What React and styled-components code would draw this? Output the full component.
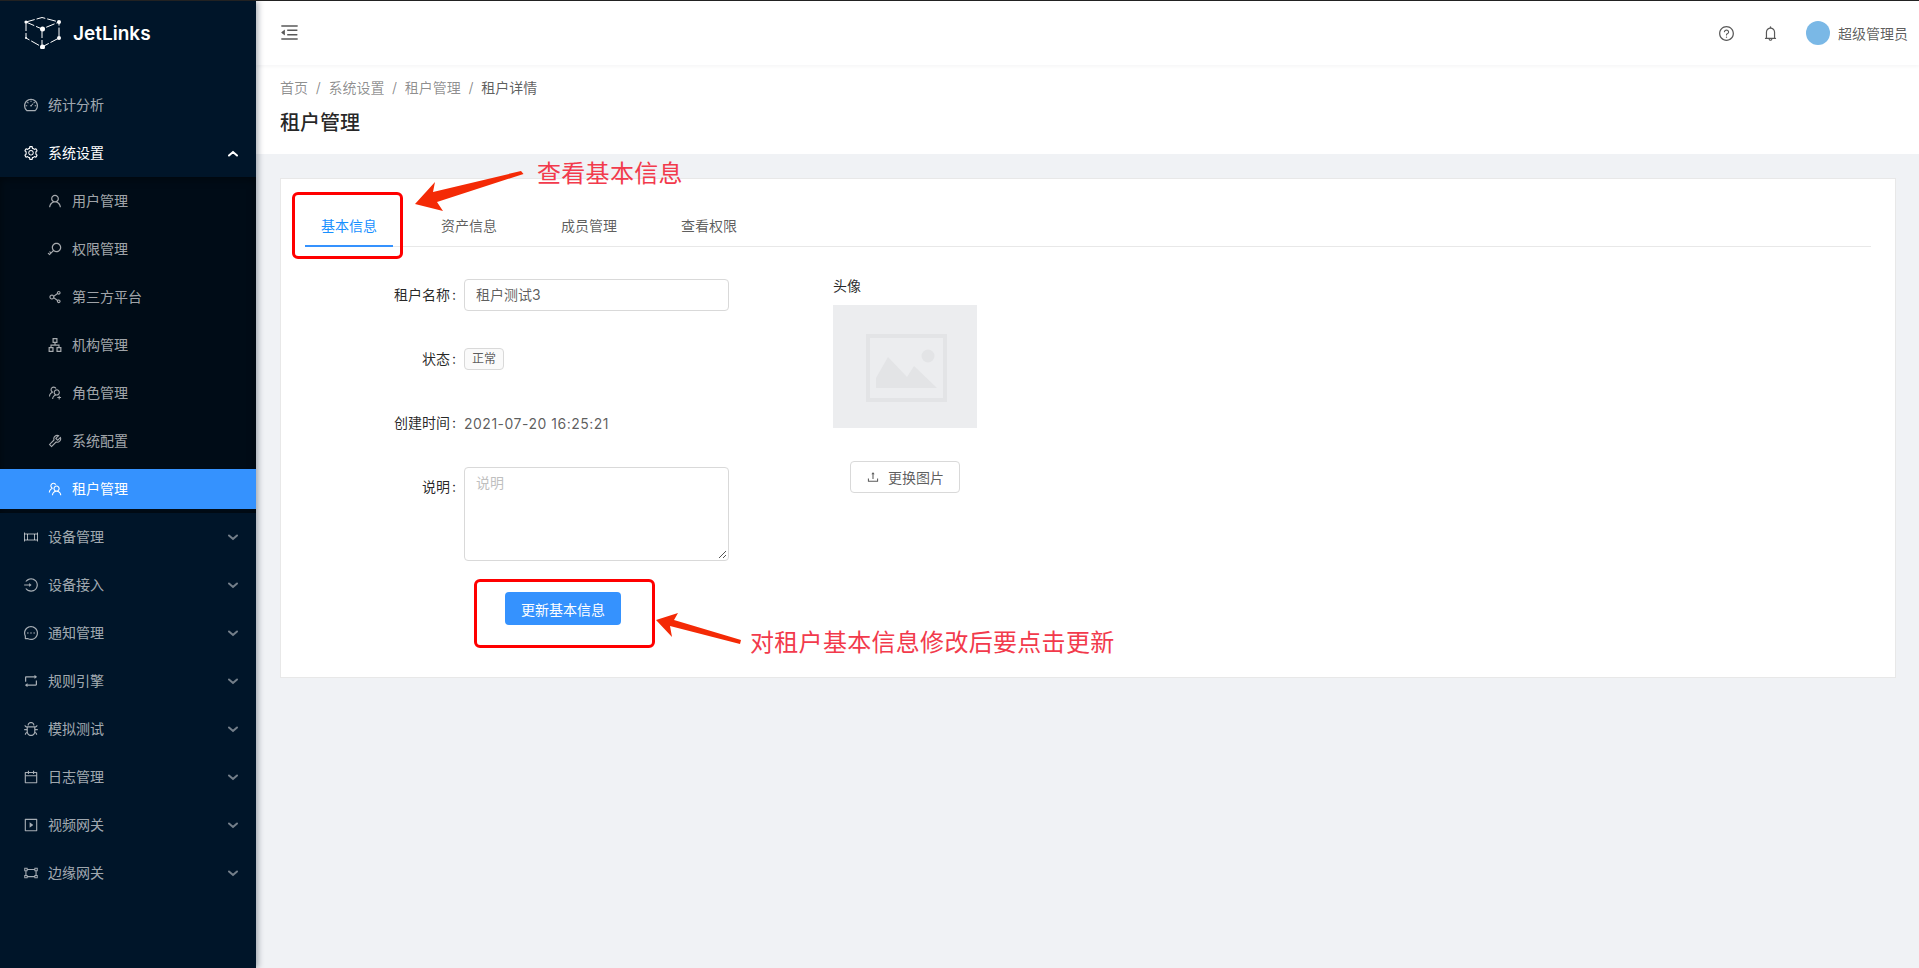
import React from "react";
import styled, { createGlobalStyle } from "styled-components";
import {
  AiOutlineDashboard, AiOutlineSetting, AiOutlineUser, AiOutlineKey, AiOutlineShareAlt,
  AiOutlineApartment, AiOutlineUsergroupAdd, AiOutlineTool, AiOutlineTeam, AiOutlineLogin,
  AiOutlineMessage, AiOutlineRetweet, AiOutlineBug, AiOutlineCalendar, AiOutlinePlaySquare,
  AiOutlineGateway, AiOutlineMenuFold, AiOutlineQuestionCircle, AiOutlineBell, AiOutlineUpload,
} from "react-icons/ai";

const FONT = `Inter, "Noto Sans CJK SC", sans-serif`;

const Global = createGlobalStyle`
  html, body { margin: 0; padding: 0; height: 100%; background: #f0f2f5; }
  body { font-family: ${FONT}; font-size: 14px; overflow: hidden; }
  * { box-sizing: border-box; }
`;

const Page = styled.div`
  position: relative; width: 1919px; height: 968px; overflow: hidden;
  border-top: 1px solid #222; display: flex; background: #f0f2f5;
`;

const Sider = styled.aside`
  width: 256px; flex: none; background: #001529; color: rgba(255,255,255,.65);
  box-shadow: 2px 0 6px rgba(0,21,41,.35); position: relative; z-index: 2;
`;
const Logo = styled.div`
  height: 64px; padding-left: 24px; display: flex; align-items: center; gap: 11px;
  color: #fff; font-size: 19px; font-weight: 600;
`;
const Menu = styled.nav`padding-top: 16px; display: flex; flex-direction: column;`;
const Row = styled.div`
  height: 40px; flex: none; display: flex; align-items: center;
  padding-left: ${p => (p.$sub ? 47 : 23)}px; padding-right: 18px; gap: 9px;
  line-height: 40px;
  color: ${p => (p.$on ? "#fff" : "rgba(255,255,255,.65)")};
  background: ${p => (p.$active ? "#3592fe" : "transparent")};
  margin: ${p => (p.$sub ? "0 0 8px" : "4px 0")};
  & > svg:first-child { flex: none; font-size: 16px; width: 16px; height: 16px; }
  &:last-child { margin-bottom: ${p => (p.$sub ? 0 : 4)}px; }
`;
const Sub = styled.div`
  background: #000c17; padding: 4px 0; box-shadow: inset 0 2px 8px rgba(0,0,0,.45);
  display: flex; flex-direction: column;
`;
const RowLabel = styled.span`flex: 1;`;
const Chevron = styled.svg`
  width: 10px; height: 7px; flex: none;
  stroke: ${p => (p.$on ? "#fff" : "rgba(255,255,255,.45)")};
  stroke-width: 2; fill: none; stroke-linecap: round;
`;

const Main = styled.main`flex: 1; min-width: 0; display: flex; flex-direction: column;`;
const Header = styled.header`
  height: 64px; background: #fff; box-shadow: 0 1px 4px rgba(0,21,41,.05);
  display: flex; align-items: center; padding: 0 11px 0 24px; position: relative; z-index: 1;
`;
const Fold = styled.span`display: flex; font-size: 21px; color: #595959; flex: 1; margin: -1px 0 0 -1px;`;
const HeadIcon = styled.span`
  display: flex; font-size: 17px; color: #595959; margin-right: ${p => p.$mr}px;
`;
const AvatarDot = styled.span`
  width: 24px; height: 24px; border-radius: 50%; background: #7ab8e6; margin-right: 8px;
`;
const UserName = styled.span`color: rgba(0,0,0,.65);`;

const PageHead = styled.section`
  height: 89px; background: #fff; padding: 12px 24px 0;
`;
const Crumbs = styled.div`
  display: flex; gap: 8px; height: 22px; line-height: 22px; color: rgba(0,0,0,.45);
  & > span:last-child { color: rgba(0,0,0,.65); }
`;
const Sep = styled.span`width: 4.4px; display: flex; justify-content: center;`;
const Title = styled.h1`
  margin: 8px 0 0; font-size: 20px; line-height: 32px; font-weight: 500; color: rgba(0,0,0,.85);
`;

const Card = styled.section`
  margin: 24px 23px 0 24px; height: 500px; background: #fff; border: 1px solid #e8e8e8;
  padding: 0 24px;
`;
const Tabs = styled.div`
  display: flex; gap: 32px; height: 68px; padding-top: 24px; border-bottom: 1px solid #e8e8e8;
`;
const Tab = styled.div`
  width: 88px; height: 44px; text-align: center; line-height: 46px;
  color: ${p => (p.$on ? "#1890ff" : "rgba(0,0,0,.65)")};
  border-bottom: 2px solid ${p => (p.$on ? "#3592fe" : "transparent")};
  margin-bottom: -1px;
`;
const Body = styled.div`display: flex; padding-top: 28px;`;
const Form = styled.div`width: 528px; flex: none;`;
const FormRow = styled.div`
  display: flex; min-height: 40px; margin-bottom: ${p => p.$mb ?? 24}px;
`;
const Label = styled.div`
  width: 159px; flex: none; text-align: right; line-height: 40px; padding-right: 8px;
  color: rgba(0,0,0,.85);
  &::after { content: ":"; margin-left: 2px; }
`;
const Value = styled.div`
  width: 265px; display: flex; align-items: center; min-height: 40px; color: rgba(0,0,0,.65);
`;
const DateText = styled.span`letter-spacing: .5px;`;
const Input = styled.div`
  width: 100%; height: 32px; border: 1px solid #d9d9d9; border-radius: 4px;
  padding: 0 11px; line-height: 30px; color: rgba(0,0,0,.65);
`;
const Tag = styled.span`
  height: 22px; padding: 0 7px; line-height: 20px; font-size: 12px; background: #fafafa;
  border: 1px solid #d9d9d9; border-radius: 4px; color: rgba(0,0,0,.65);
`;
const Area = styled.div`
  position: relative; width: 265px; height: 94px; border: 1px solid #d9d9d9; border-radius: 4px;
  padding: 4px 11px; line-height: 22px; color: #bfbfbf;
`;
const Grip = styled.svg`position: absolute; right: 1px; bottom: 1px; width: 9px; height: 9px; stroke: #555; stroke-width: 1;`;
const Primary = styled.button`
  display: block; margin-left: 200px; width: 116px; height: 33px; border: 0; border-radius: 4px;
  background: #3592fe; color: #fff; font: inherit; padding: 0;
`;
const AvatarCol = styled.div`display: flex; flex-direction: column;`;
const AvatarLabel = styled.div`line-height: 22px; color: rgba(0,0,0,.85);`;
const ImageBox = styled.div`
  width: 144px; height: 123px; margin-top: 8px; background: #ecedef;
  display: flex; align-items: center; justify-content: center;
`;
const ImageGlyph = styled.svg`width: 81px; height: 68px; margin-top: 3px; margin-left: 3px;`;
const Ghost = styled.button`
  width: 110px; height: 32px; margin: 33px 0 0 17px; border: 1px solid #d9d9d9; border-radius: 4px;
  background: #fff; color: rgba(0,0,0,.65); font: inherit; padding: 0;
  display: flex; align-items: center; justify-content: center; gap: 8px;
`;

const Frame = styled.div`
  position: absolute; left: ${p => p.$x}px; top: ${p => p.$y}px; width: ${p => p.$w}px; height: ${p => p.$h}px;
  border: 3px solid #f00; border-radius: 6px; z-index: 5;
`;
const Note = styled.div`
  position: absolute; left: ${p => p.$x}px; top: ${p => p.$y}px; z-index: 5; white-space: nowrap;
  font-size: 24px; line-height: 32px; font-family: "Noto Sans CJK SC", sans-serif; font-weight: 400;
  letter-spacing: ${p => p.$ls ?? 0}px; color: #f23a4c;
`;
const Arrows = styled.svg`position: absolute; left: 0; top: 0; width: 1919px; height: 968px; z-index: 4; pointer-events: none;`;

const DeviceIcon = () => (
  <svg viewBox="0 0 16 16" fill="none" stroke="currentColor" strokeWidth="1">
    <path d="M1.5 3.5v9M14.5 3.5v9M1.5 5h13M1.5 11h13M4.5 5v6M11.5 5v6" />
  </svg>
);

const LogoMark = () => (
  <svg width="38" height="32" viewBox="0 0 38 32" fill="none" stroke="#fff" strokeWidth="1">
    <g strokeDasharray="9 2">
      <path d="M2 5 L18 0.5 L35 5" />
      <path d="M2 5 L18 12 L35 5" />
      <path d="M2 5 L2 21 L18 30 L35 21 L35 5" />
      <path d="M18 12 L18 30" />
    </g>
    <g fill="#fff" stroke="none">
      <circle cx="2" cy="5" r="1.6" /><circle cx="35" cy="5" r="2" />
      <circle cx="18.5" cy="12" r="2.5" /><circle cx="35" cy="21" r="2" />
      <circle cx="18.5" cy="30" r="2.5" /><circle cx="2" cy="21" r="1" />
    </g>
  </svg>
);

const ChevronIcon = ({ up, on }) => (
  <Chevron viewBox="0 0 10 7" $on={on}>
    <path d={up ? "M1 5.5 L5 2 L9 5.5" : "M1 1.5 L5 5 L9 1.5"} />
  </Chevron>
);

const subs = [
  ["用户管理", AiOutlineUser], ["权限管理", AiOutlineKey], ["第三方平台", AiOutlineShareAlt],
  ["机构管理", AiOutlineApartment], ["角色管理", AiOutlineUsergroupAdd], ["系统配置", AiOutlineTool],
  ["租户管理", AiOutlineTeam, true],
];
const lower = [
  ["设备管理", DeviceIcon], ["设备接入", AiOutlineLogin], ["通知管理", AiOutlineMessage],
  ["规则引擎", AiOutlineRetweet], ["模拟测试", AiOutlineBug], ["日志管理", AiOutlineCalendar],
  ["视频网关", AiOutlinePlaySquare], ["边缘网关", AiOutlineGateway],
];

export default function App() {
  return (
    <Page>
      <Global />
      <Sider>
        <Logo><LogoMark />JetLinks</Logo>
        <Menu>
          <Row><AiOutlineDashboard /><RowLabel>统计分析</RowLabel></Row>
          <Row $on><AiOutlineSetting /><RowLabel>系统设置</RowLabel><ChevronIcon up on /></Row>
          <Sub>
            {subs.map(([t, I, a]) => (
              <Row key={t} $sub $on={a} $active={a}><I /><RowLabel>{t}</RowLabel></Row>
            ))}
          </Sub>
          {lower.map(([t, I]) => (
            <Row key={t}><I /><RowLabel>{t}</RowLabel><ChevronIcon /></Row>
          ))}
        </Menu>
      </Sider>
      <Main>
        <Header>
          <Fold><AiOutlineMenuFold /></Fold>
          <HeadIcon $mr={27}><AiOutlineQuestionCircle /></HeadIcon>
          <HeadIcon $mr={27}><AiOutlineBell /></HeadIcon>
          <AvatarDot />
          <UserName>超级管理员</UserName>
        </Header>
        <PageHead>
          <Crumbs>
            <span>首页</span><Sep>/</Sep><span>系统设置</span><Sep>/</Sep><span>租户管理</span><Sep>/</Sep><span>租户详情</span>
          </Crumbs>
          <Title>租户管理</Title>
        </PageHead>
        <Card>
          <Tabs>
            <Tab $on>基本信息</Tab><Tab>资产信息</Tab><Tab>成员管理</Tab><Tab>查看权限</Tab>
          </Tabs>
          <Body>
            <Form>
              <FormRow><Label>租户名称</Label><Value><Input>租户测试3</Input></Value></FormRow>
              <FormRow><Label>状态</Label><Value><Tag>正常</Tag></Value></FormRow>
              <FormRow><Label>创建时间</Label><Value><DateText>2021-07-20 16:25:21</DateText></Value></FormRow>
              <FormRow $mb={31}>
                <Label>说明</Label>
                <Area>说明<Grip viewBox="0 0 9 9"><path d="M1 8 L8 1 M5 8 L8 5" /></Grip></Area>
              </FormRow>
              <Primary>更新基本信息</Primary>
            </Form>
            <AvatarCol>
              <AvatarLabel>头像</AvatarLabel>
              <ImageBox>
                <ImageGlyph viewBox="0 0 81 68">
                  <path fill="#e3e4e6" fillRule="evenodd" d="M0 0H81V68H0ZM4 4V64H77V4Z" />
                  <circle cx="62" cy="22" r="6.5" fill="#e3e4e6" />
                  <path fill="#e3e4e6" d="M10 54V44L22 23L41 43L48 32L71 54Z" />
                </ImageGlyph>
              </ImageBox>
              <Ghost><AiOutlineUpload />更换图片</Ghost>
            </AvatarCol>
          </Body>
        </Card>
      </Main>

      <Frame $x={292} $y={191} $w={111} $h={67} />
      <Frame $x={474} $y={578} $w={181} $h={69} />
      <Arrows viewBox="0 0 1919 968">
        <polygon fill="#f42a06" points="415,203 435,181 433,191 521,170 523.5,173 437,201 443,210" />
        <polygon fill="#f42a06" points="656,619 678,612 674,619 741,639 740,643 670,625 672,636" />
      </Arrows>
      <Note $x={537} $y={155} $ls={.3}>查看基本信息</Note>
      <Note $x={750} $y={624} $ls={.3}>对租户基本信息修改后要点击更新</Note>
    </Page>
  );
}
